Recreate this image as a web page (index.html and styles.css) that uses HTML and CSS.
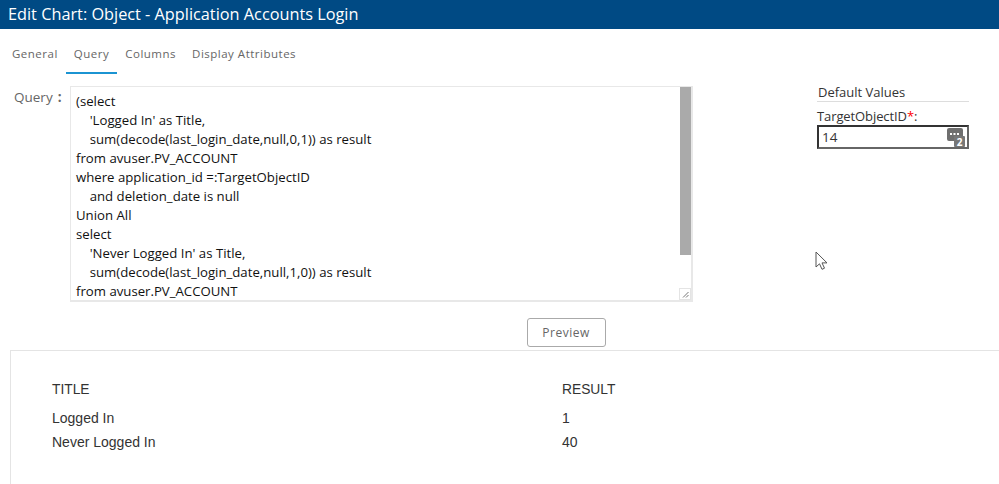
FILE: index.html
```html
<!DOCTYPE html>
<html lang="en">
<head>
<meta charset="utf-8">
<title>Edit Chart</title>
<link rel="stylesheet" href="styles.css">
</head>
<body>
<header class="titlebar">Edit Chart: Object - Application Accounts Login</header>
<nav class="tabs">
  <a class="tab">General</a>
  <a class="tab active">Query</a>
  <a class="tab">Columns</a>
  <a class="tab">Display Attributes</a>
</nav>
<main class="editor">
  <label class="query-label">Query<span class="colon">:</span></label>
  <div class="query-box">
<pre class="query-text">(select
    'Logged In' as Title,
    sum(decode(last_login_date,null,0,1)) as result
from avuser.PV_ACCOUNT
where application_id =:TargetObjectID
    and deletion_date is null
Union All
select
    'Never Logged In' as Title,
    sum(decode(last_login_date,null,1,0)) as result
from avuser.PV_ACCOUNT</pre>
    <div class="scrollbar"><div class="thumb"></div></div>
    <svg class="grip" width="10" height="10" viewBox="0 0 10 10"><path d="M3 8.5 8.5 3M6 8.5 8.5 6" stroke="#777" stroke-width="1" fill="none"/></svg>
  </div>
  <aside class="defaults">
    <h2 class="defaults-title">Default Values</h2>
    <div class="field-label">TargetObjectID<span class="req">*</span>:</div>
    <div class="field-input">
      <span>14</span>
      <svg class="lookup" width="18" height="19" viewBox="0 0 18 19">
        <path d="M0 2a2 2 0 0 1 2-2h12a2 2 0 0 1 2 2v6H8v5H2a2 2 0 0 1-2-2z" fill="#6f6f6f"/>
        <rect x="3" y="5" width="2" height="2" fill="#fff"/><rect x="6.500" y="5" width="2" height="2" fill="#fff"/><rect x="10" y="5" width="2" height="2" fill="#fff"/>
        <rect x="7" y="8" width="11" height="11" rx="1" fill="#777"/>
        <text x="12.500" y="17.500" class="lookup-num">2</text>
      </svg>
    </div>
  </aside>
</main>
<div class="actions"><button class="preview" type="button">Preview</button></div>
<section class="results">
  <table class="grid">
    <thead><tr><th>TITLE</th><th>RESULT</th></tr></thead>
    <tbody>
      <tr><td>Logged In</td><td>1</td></tr>
      <tr><td>Never Logged In</td><td>40</td></tr>
    </tbody>
  </table>
</section>
<svg class="cursor" width="14" height="20" viewBox="0 0 14 20"><path d="M1 1v15l3.500-3.200 2.500 5.500 2.500-1.100-2.500-5.300h5z" fill="#fff" stroke="#555" stroke-width="1"/></svg>
</body>
</html>
```
FILE: styles.css
```css
* { box-sizing: border-box; }
html, body { margin: 0; height: 484px; overflow: hidden; background: #fff; }
body { font-family: "Open Sans", sans-serif; color: #333; position: relative; }
.titlebar { height: 29px; background: #004a84; color: #fff; font-size: 16.300px; line-height: 29px; padding-left: 8px; }
.tabs { display: flex; height: 45px; padding: 0 0 0 4px; }
.tab { padding: 17px 8px 0; font-size: 11.500px; letter-spacing: .5px; color: #666; height: 45px; margin-right: 0; border-bottom: 2px solid transparent; }
.tab.active { border-bottom-color: #1b94d2; }
.editor { display: flex; padding: 12px 0 0 14px; height: 244px; }
.query-label { width: 56px; padding-top: 2px; font-size: 13.500px; color: #666; }
.colon { margin-left: 5px; font-weight: 700; }
.query-box { position: relative; width: 623px; height: 216px; border: 2px solid #e8e8e8; border-width: 1px 2px 2px 1px; overflow: hidden; }
.query-text { margin: 5px 0 0 5px; font-family: "Open Sans", sans-serif; font-size: 13.200px; line-height: 19px; color: #111; white-space: pre; }
.scrollbar { position: absolute; top: 0; right: 0; bottom: 0; width: 11px; }
.thumb { height: 168px; background: #aaa; }
.grip { position: absolute; right: 0; bottom: 0; background: #fff; border: 1px solid #e4e4e4; width: 12px; height: 12px; }
.defaults { margin-left: 124px; width: 152px; }
.defaults-title { margin: -3px 0 6px; padding: 0 0 0 1px; font-size: 13px; line-height: 18px; font-weight: 400; color: #333; border-bottom: 1px solid #ddd; }
.field-label { font-size: 13px; line-height: 17px; padding-left: 0; color: #333; letter-spacing: -.1px; }
.req { color: #f00; }
.field-input { height: 24px; border: 2px solid #333; border-right-color: #666; border-bottom-color: #666; display: flex; align-items: center; justify-content: space-between; padding: 0 2px 0 3px; font-size: 13.500px; line-height: 18px; }
.lookup { overflow: visible; }
.lookup-num { font-family: "Open Sans", sans-serif; font-size: 10px; font-weight: 700; fill: #fff; text-anchor: middle; }
.actions { display: flex; justify-content: center; padding-left: 133px; height: 32px; margin-top: 0; }
.preview { width: 79px; height: 29px; margin-left: 0; background: #fff; border: 1px solid #aaa; border-radius: 3px; font-family: "Open Sans", sans-serif; font-size: 12px; letter-spacing: .5px; color: #666; }
.results { margin-left: 10px; height: 140px; border: 1px solid #e4e4e4; border-width: 1px 0 0 1px; padding: 22px 0 0 41px; }
.grid { border-collapse: collapse; table-layout: fixed; width: 700px; font-family: "Liberation Sans", sans-serif; font-size: 14px; color: #333; }
.grid th { font-weight: 400; font-size: 13.800px; text-align: left; padding: 0; }
.grid th:first-child { width: 510px; }
.grid td { height: 24px; padding: 0; }
.grid thead tr { height: 33px; }
.cursor { position: absolute; left: 815px; top: 251px; }
```
